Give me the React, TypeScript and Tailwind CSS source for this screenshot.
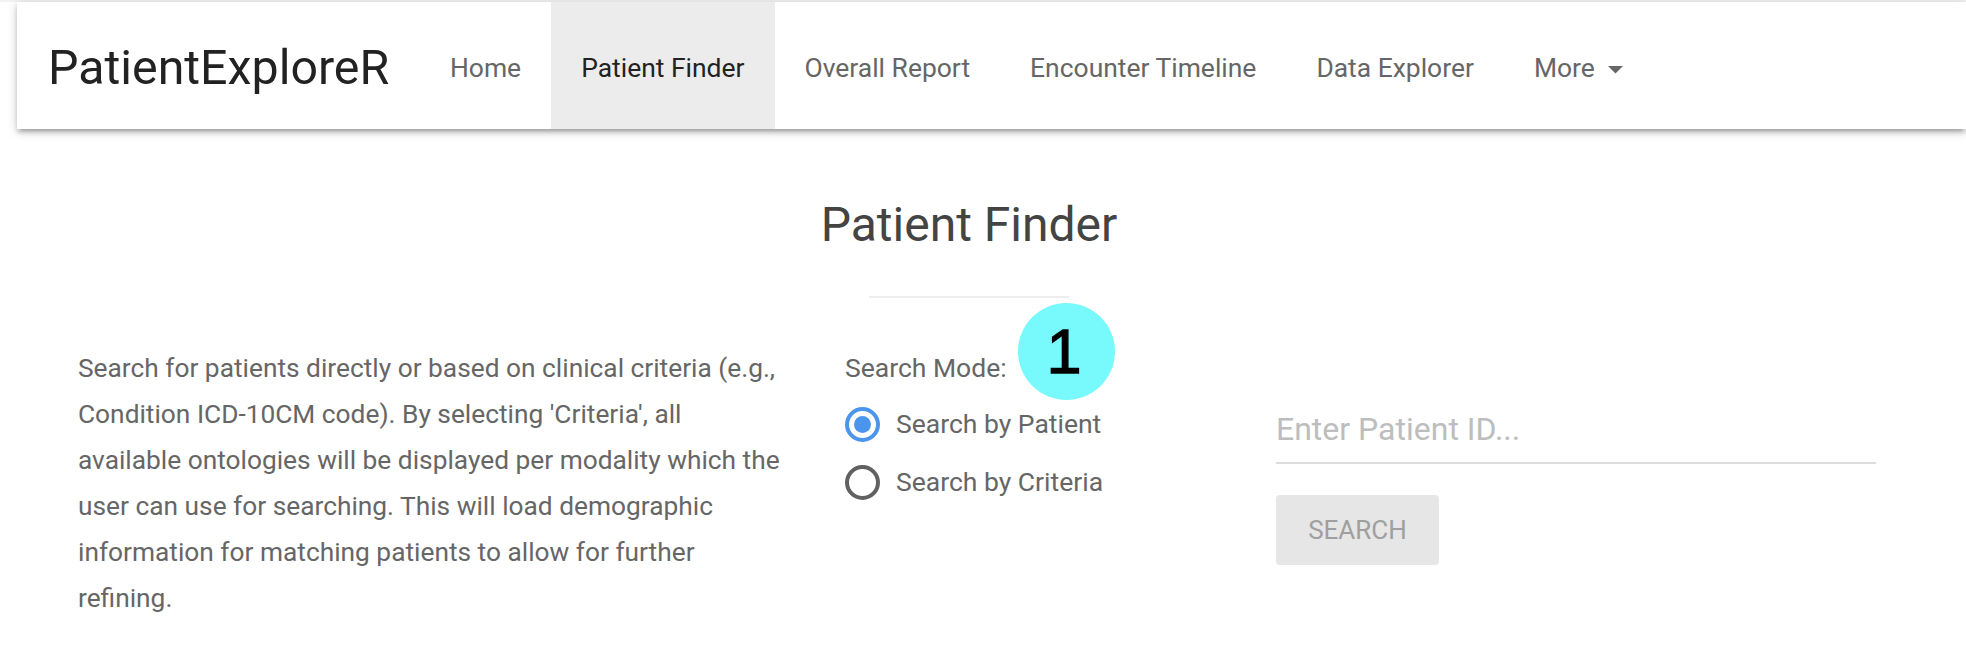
import React from "react";

const navItems = [
  { label: "Home", active: false },
  { label: "Patient Finder", active: true },
  { label: "Overall Report", active: false },
  { label: "Encounter Timeline", active: false },
  { label: "Data Explorer", active: false },
];

const descLines = [
  "Search for patients directly or based on clinical criteria (e.g.,",
  "Condition ICD-10CM code). By selecting 'Criteria', all",
  "available ontologies will be displayed per modality which the",
  "user can use for searching. This will load demographic",
  "information for matching patients to allow for further",
  "refining.",
];

export default function App() {
  return (
    <div className="relative w-[1966px] h-[660px] overflow-hidden bg-white font-['Roboto',sans-serif]">
      <div className="h-[2px] bg-[#f3f3f3]" />
      <nav className="ml-[17px] h-[127px] bg-white flex items-stretch shadow-[0_4px_4px_0_rgba(0,0,0,0.14),0_6px_2px_-4px_rgba(0,0,0,0.12),0_2px_10px_0_rgba(0,0,0,0.2)] relative z-10">
        <div className="w-[403px] pl-[31px] pt-[5px] flex items-center text-[48.3px] text-[#222] whitespace-nowrap">
          PatientExploreR
        </div>
        <ul className="flex items-stretch">
          {navItems.map((it) => (
            <li
              key={it.label}
              className={
                it.active
                  ? "px-[30px] pt-[5px] flex items-center text-[26.45px] text-[#222] bg-[#ececec] whitespace-nowrap"
                  : "px-[30px] pt-[5px] flex items-center text-[26.45px] text-[#666] whitespace-nowrap"
              }
            >
              {it.label}
            </li>
          ))}
          <li className="px-[30px] pt-[5px] flex items-center text-[26.45px] text-[#666] whitespace-nowrap">
            More
            <svg className="ml-[13px] mt-[4px]" width="15" height="8" viewBox="0 0 15 8">
              <path d="M0 0 L15 0 L7.5 7.5 Z" fill="#666" />
            </svg>
          </li>
        </ul>
      </nav>

      <main className="w-[1938px]">
        <h1 className="mt-[68px] h-[56px] text-center text-[48px] leading-[56px] text-[#444] font-normal">
          Patient Finder
        </h1>
        <div className="mx-auto mt-[43px] w-[200px] h-[2px] bg-[#eeeeee]" />

        <div className="mt-[47px] flex">
          <div className="ml-[78px] w-[767px] text-[26.3px] leading-[46px] text-[#666]">
            {descLines.map((l) => (
              <div key={l} className="whitespace-nowrap">
                {l}
              </div>
            ))}
          </div>

          <div className="w-[431px] text-[26.5px] text-[#666]">
            <div className="leading-[46px]">Search Mode:</div>
            <div className="mt-[4px] h-[58px] flex items-center">
              <div className="w-[35px] h-[35px] rounded-full border-[4px] border-[#4b95ec] flex items-center justify-center">
                <div className="w-[17px] h-[17px] rounded-full bg-[#4b95ec]" />
              </div>
              <span className="ml-[16px] leading-[58px]">Search by Patient</span>
            </div>
            <div className="h-[58px] flex items-center">
              <div className="w-[35px] h-[35px] rounded-full border-[4px] border-[#616161]" />
              <span className="ml-[16px] leading-[58px]">Search by Criteria</span>
            </div>
          </div>

          <div className="w-[600px] mt-[51px]">
            <input
              type="text"
              placeholder="Enter Patient ID..."
              className="block w-[600px] h-[68px] border-b-2 border-[#dcdcdc] bg-transparent outline-none text-[32px] text-[#444] placeholder:text-[#bdbdbd] font-['Roboto',sans-serif]"
            />
            <button className="mt-[31px] w-[163px] h-[70px] rounded-[4px] bg-[#e6e6e6] text-[26px] text-[#9f9f9f] uppercase font-['Roboto',sans-serif]">
              Search
            </button>
          </div>
        </div>
      </main>

      <div className="absolute left-[1018px] top-[303px] w-[97px] h-[97px] rounded-full bg-[#78f9fb] flex items-center justify-center">
        <span className="font-['Liberation_Sans',Arial,sans-serif] text-[63px] leading-none text-black pr-[5px] [-webkit-text-stroke:1.3px_black]">1</span>
      </div>
    </div>
  );
}
